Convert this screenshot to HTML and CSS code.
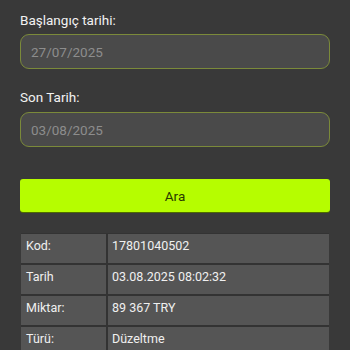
FILE: index.html
```html
<!DOCTYPE html>
<html lang="tr">
<head>
<meta charset="utf-8">
<link rel="stylesheet" href="styles.css">
</head>
<body>
<div class="page">
  <div class="field">
    <div class="label">Başlangıç tarihi:</div>
    <div class="input">27/07/2025</div>
  </div>
  <div class="field second">
    <div class="label">Son Tarih:</div>
    <div class="input">03/08/2025</div>
  </div>
  <button class="btn">Ara</button>
  <div class="table">
    <div class="cell key">Kod:</div><div class="cell">17801040502</div>
    <div class="cell key">Tarih</div><div class="cell">03.08.2025 08:02:32</div>
    <div class="cell key">Miktar:</div><div class="cell">89 367 TRY</div>
    <div class="cell key">Türü:</div><div class="cell">Düzeltme</div>
  </div>
</div>
</body>
</html>
```
FILE: styles.css
```css
html, body {
  margin: 0;
  padding: 0;
  background: #393939;
  height: 100%;
}
body {
  font-family: Roboto, "Noto Sans", sans-serif;
  font-size: 13.5px;
  color: #f0f0f0;
}
.page {
  padding: 10px 20px 0 20px;
}
.label {
  line-height: 20px;
  color: #f2f2f2;
}
.input {
  margin-top: 4px;
  height: 35px;
  box-sizing: border-box;
  border: 1.5px solid #7b8a3a;
  border-radius: 9px;
  background: #4a4a4a;
  color: #8d8d8d;
  padding-left: 10px;
  display: flex;
  align-items: center;
}
.second {
  margin-top: 18px;
}
.second .input {
  margin-top: 5px;
}
.btn {
  display: block;
  width: 100%;
  margin-top: 32px;
  height: 33px;
  border: none;
  border-radius: 3px;
  background: #b6fd00;
  box-shadow: 0 1px 0 #4f6a00;
  color: #2a3a00;
  font-family: Roboto, "Noto Sans", sans-serif;
  font-size: 13.5px;
  padding: 0;
}
.table {
  margin: 21px 1px 0 1px;
  display: grid;
  grid-template-columns: 85px 1fr;
  gap: 2px 2px;
  background: #333333;
  padding: 1px 0 0 0;
  font-size: 12.5px;
}
.cell {
  background: #555555;
  height: 29px;
  box-sizing: border-box;
  padding: 4px 0 0 4px;
  line-height: 15px;
  color: #f0f0f0;
}
.key {
  padding-left: 5px;
}
```
